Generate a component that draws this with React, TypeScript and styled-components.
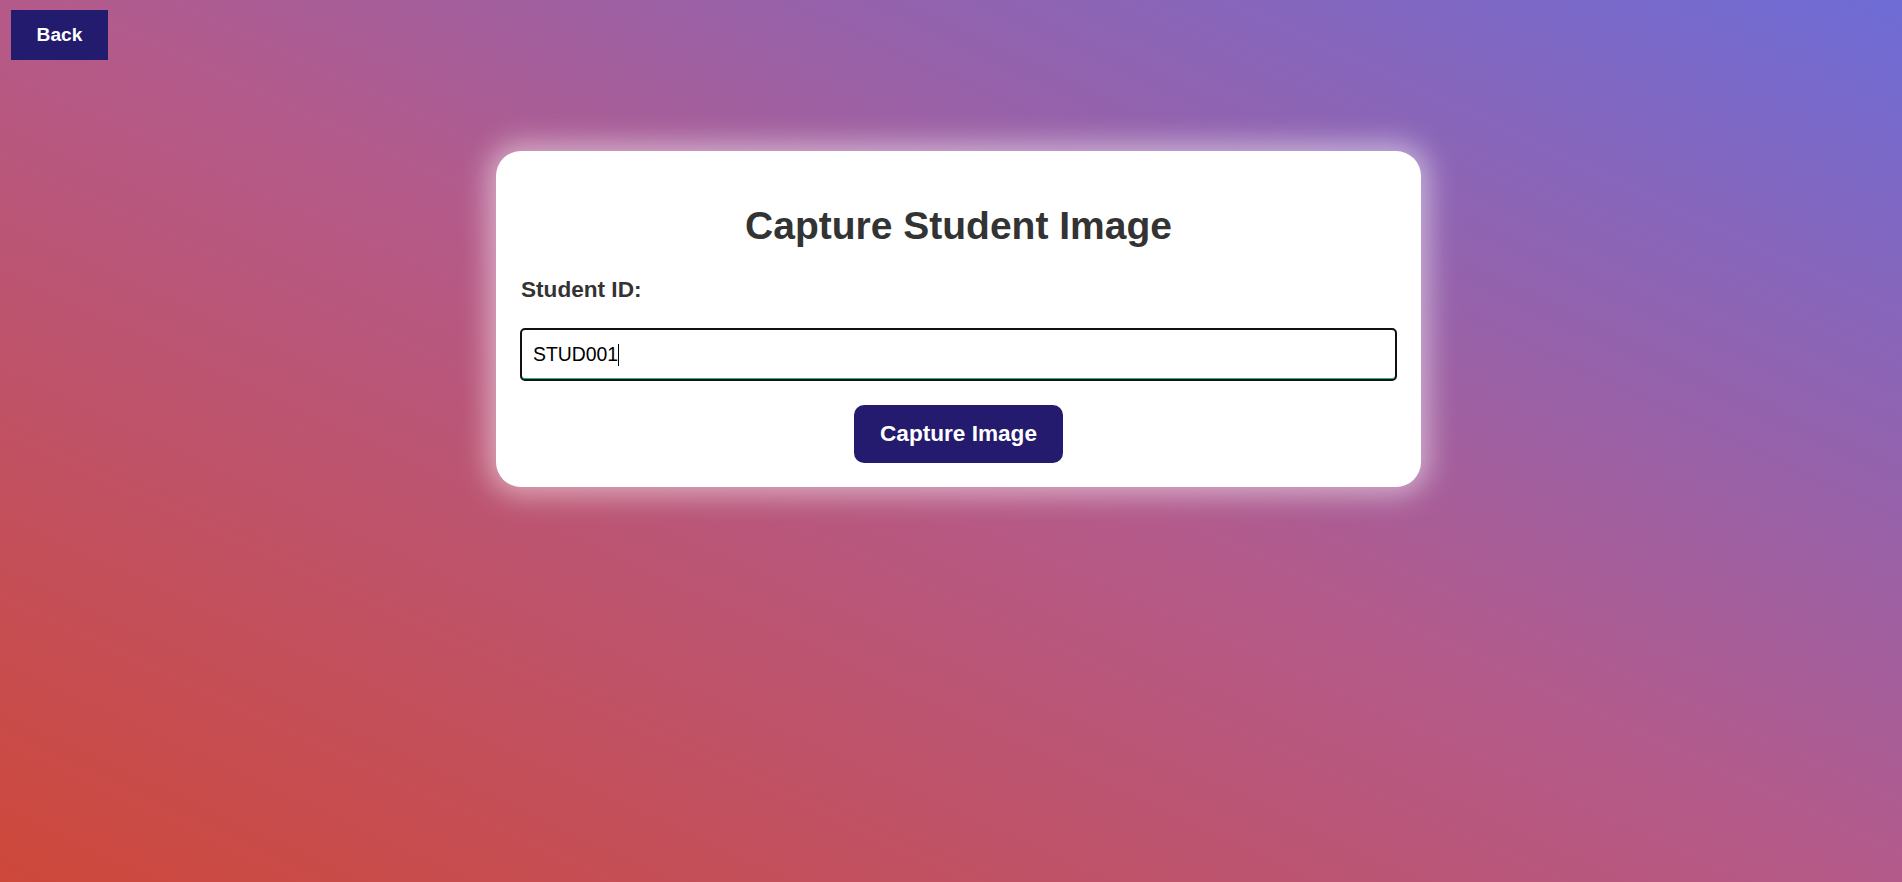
import React from "react";
import styled, { createGlobalStyle } from "styled-components";

const GlobalStyle = createGlobalStyle`
  html, body {
    margin: 0;
    padding: 0;
  }
  body {
    font-family: "Liberation Sans", Arial, Helvetica, sans-serif;
  }
  * { box-sizing: border-box; }
`;

const Page = styled.div`
  min-height: 100vh;
  width: 100%;
  display: flex;
  flex-direction: column;
  padding-top: 10px;
  background: linear-gradient(
    to top right,
    rgb(206, 72, 58) 0%,
    rgb(180, 90, 138) 50%,
    rgb(110, 108, 214) 100%
  );
`;

const TopBar = styled.div`
  display: flex;
  padding-left: 11px;
`;

const BackButton = styled.button`
  width: 97px;
  height: 50px;
  border: none;
  border-radius: 0;
  background: #231b6e;
  color: #fff;
  font-family: "Liberation Sans", Arial, sans-serif;
  font-weight: 700;
  font-size: 19.2px;
  cursor: pointer;
  padding: 0;
`;

const CardRow = styled.div`
  display: flex;
  justify-content: center;
  padding-left: 15px;
  margin-top: 91px;
`;

const Card = styled.div`
  width: 925px;
  background: #fff;
  border-radius: 25px;
  padding: 24px;
  display: flex;
  flex-direction: column;
  box-shadow: 0 0 28px 8px rgba(255, 255, 255, 0.5);
`;

const Title = styled.h2`
  margin: 28px 0 29px;
  text-align: center;
  font-size: 39px;
  line-height: 45px;
  font-weight: 700;
  color: #333;
`;

const Label = styled.label`
  display: block;
  font-size: 22.6px;
  line-height: 26px;
  font-weight: 700;
  color: #333;
  padding-left: 1px;
  margin-bottom: 25px;
`;

const InputWrap = styled.div`
  position: relative;
`;

const Input = styled.input`
  width: 100%;
  height: 53px;
  border: 2px solid #111;
  border-radius: 5px;
  padding: 0 11px;
  font-family: "Liberation Sans", Arial, sans-serif;
  font-size: 19.4px;
  color: #000;
  background: #fff;
  outline: none;
  box-shadow: inset 0 -1px 0 #1fb57c;
`;

const CaretPos = styled.div`
  position: absolute;
  left: 98px;
  top: 16px;
  pointer-events: none;
`;

const Caret = styled.span`
  display: block;
  width: 1px;
  height: 22px;
  background: #000;
`;

const CaptureButton = styled.button`
  align-self: center;
  margin-top: 24px;
  width: 209px;
  height: 58px;
  border: none;
  border-radius: 10px;
  background: #241b6f;
  color: #fff;
  font-family: "Liberation Sans", Arial, sans-serif;
  font-weight: 700;
  font-size: 22.6px;
  padding: 0;
  cursor: pointer;
`;

export default function App() {
  return (
    <>
      <GlobalStyle />
      <Page>
        <TopBar>
          <BackButton>Back</BackButton>
        </TopBar>
        <CardRow>
          <Card>
            <Title>Capture Student Image</Title>
            <Label htmlFor="sid">Student ID:</Label>
            <InputWrap>
              <Input id="sid" defaultValue="STUD001" readOnly />
              <CaretPos>
                <Caret />
              </CaretPos>
            </InputWrap>
            <CaptureButton>Capture Image</CaptureButton>
          </Card>
        </CardRow>
      </Page>
    </>
  );
}
